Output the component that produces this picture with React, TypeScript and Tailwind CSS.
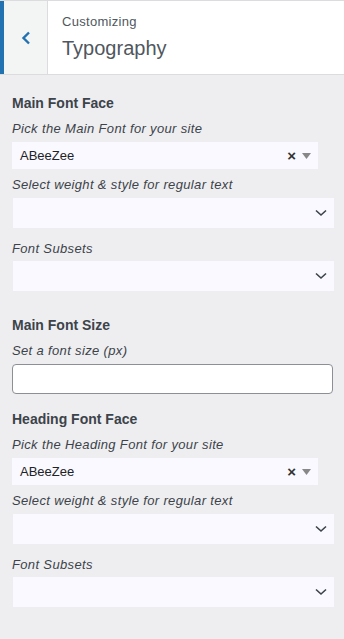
export default function App() {
  const font = { fontFamily: '"Liberation Sans", Arial, sans-serif' };
  return (
    <div className="w-[344px] min-h-[639px] bg-[#eeeef0] text-[#3c434a]" style={font}>
      <Header />
      <div className="px-3 pt-[18px] pb-6">
        <FontFace title="Main Font Face" pick="Pick the Main Font for your site" />
        <div className="mt-[24px]">
          <h3 className="text-[14px] font-bold leading-5">Main Font Size</h3>
          <p className="mt-[6px] text-[13px] italic leading-5 tracking-[0.35px]">Set a font size (px)</p>
          <input
            type="text"
            className="mt-[3px] block h-[30px] w-[321px] rounded-[4px] border border-[#8c8f94] bg-white"
          />
        </div>
        <div className="mt-[15px]">
          <FontFace title="Heading Font Face" pick="Pick the Heading Font for your site" />
        </div>
      </div>
    </div>
  );
}

function Header() {
  return (
    <div className="flex h-[75px] border-t border-b border-[#dcdcde] bg-white">
      <button className="flex w-[48px] items-center justify-center border-l-4 border-r border-l-[#2271b1] border-r-[#dcdcde] bg-[#f3f4f4] text-[#2271b1]">
        <svg width="12" height="14" viewBox="0 0 12 14" fill="none">
          <path d="M9 1.5 3.5 7 9 12.5" stroke="currentColor" strokeWidth="2.4" />
        </svg>
      </button>
      <div className="flex flex-col pl-[14px] pt-[13px]">
        <span className="text-[13px] leading-4 tracking-[0.3px] text-[#50575e]">Customizing</span>
        <span className="mt-[4px] text-[20px] font-light leading-7 text-[#50575e]">Typography</span>
      </div>
    </div>
  );
}

function FontFace({ title, pick }: { title: string; pick: string }) {
  return (
    <div>
      <h3 className="text-[14px] font-bold leading-5">{title}</h3>
      <p className="mt-[6px] text-[13px] italic leading-5 tracking-[0.35px]">{pick}</p>
      <div className="mt-[3px] flex h-[27px] w-[306px] items-center bg-[#f9f9ff] pl-[8px] pr-[7px] text-[13px] text-[#1d2327]">
        <span className="flex-1">ABeeZee</span>
        <span className="mr-[6px] text-[15px] font-bold leading-none text-[#333]">×</span>
        <svg width="9" height="6" viewBox="0 0 9 6">
          <path d="M0 0h9L4.5 6z" fill="#888" />
        </svg>
      </div>
      <p className="mt-[6px] text-[13px] italic leading-5 tracking-[0.35px]">Select weight &amp; style for regular text</p>
      <div className="mt-[3px]">
        <Select />
      </div>
      <p className="mt-[11px] text-[13px] italic leading-5 tracking-[0.35px]">Font Subsets</p>
      <div className="mt-[2px]">
        <Select />
      </div>
    </div>
  );
}

function Select() {
  return (
    <div className="ml-px flex h-[30px] w-[321px] items-center justify-end bg-[#f9f9ff] pr-[7px]">
      <svg width="12" height="8" viewBox="0 0 12 8" fill="none">
        <path d="M1 1.5 6 6l5-4.5" stroke="#3c434a" strokeWidth="1.6" />
      </svg>
    </div>
  );
}
